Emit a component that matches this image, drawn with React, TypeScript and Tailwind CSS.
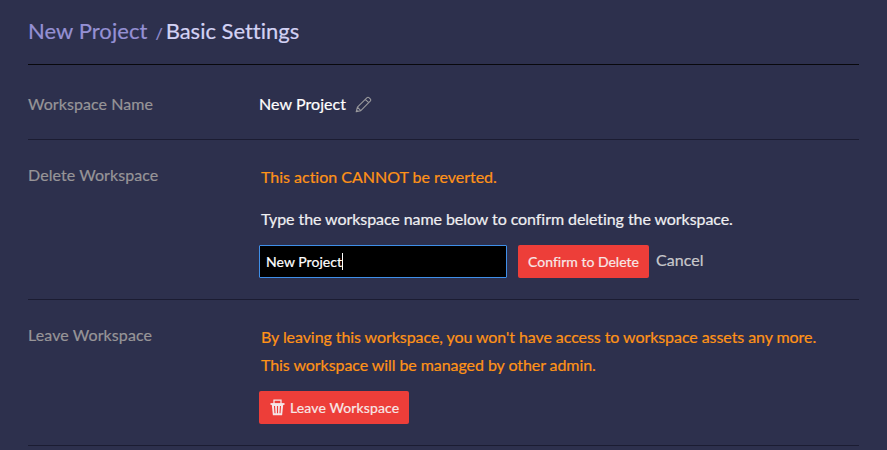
import React from 'react';

export default function App() {
  return (
    <main className="h-[450px] w-[887px] overflow-hidden bg-[#2d304d] px-7 font-['Lato',sans-serif] text-base text-white [font-variant-ligatures:none] [-webkit-text-stroke:0.2px]">
      <header className="flex h-[65px] items-start border-b border-[#08080c] pt-[15px] text-[22px] leading-8">
        <span className="tracking-[0.06px] text-[#9590d4]">New Project</span>
        <span className="ml-2 mr-[3px] text-base leading-[35px] text-[#9590d4]">/</span>
        <h1 className="text-[#d3d2f4]">Basic Settings</h1>
      </header>
      <section className="flex h-[75px] border-b border-[#1b1c32] pt-[27px] leading-6">
        <h2 className="w-[231px] tracking-[0.06px] text-[#979598]">Workspace Name</h2>
        <span className="tracking-[0.07px]">New Project</span>
        <svg className="ml-[9px] mt-[4px] h-[17px] w-[17px]" viewBox="0 0 17 17" fill="none" stroke="#99999d" strokeWidth="1.1" strokeLinejoin="round"><path d="M1.2 15.8l1.2-4.6L11.8 1.8Q13 .7 14.2 1.8l1 1q1.1 1.2 0 2.4l-9.4 9.4zM2.4 11.2l3.4 3.4M10.3 3.3l3.4 3.4M1.6 14.3l1.1 1.1" /></svg>
      </section>
      <section className="flex h-[160px] border-b border-[#1b1c32]">
        <h2 className="w-[231px] pt-[23px] leading-6 tracking-[0.07px] text-[#979598]">Delete Workspace</h2>
        <div className="flex-1">
          <p className="ml-[2px] pt-[25px] leading-6 tracking-[-0.01px] text-[#ff9317]">This action CANNOT be reverted.</p>
          <p className="ml-[2px] pt-[18px] leading-6 tracking-[-0.07px] text-[#efeff2]">Type the workspace name below to confirm deleting the workspace.</p>
          <div className="mt-[14px] flex">
            <div className="flex h-[33px] w-[248px] items-center rounded-[1px] border border-[#3f8fe8] bg-black px-[6px] text-sm tracking-[0.05px]">New Project<span className="h-[17px] w-px bg-white" /></div>
            <button className="ml-[11px] h-[33px] w-[131px] rounded-[2px] bg-[#ed3e39] text-sm text-[#f8e8e8]">Confirm to Delete</button>
            <button className="ml-[7px] h-[30px] tracking-[0.07px] text-[#c8c8cb]">Cancel</button>
          </div>
        </div>
      </section>
      <section className="flex h-[146px] border-b border-[#1b1c32]">
        <h2 className="w-[231px] pt-[23px] leading-6 tracking-[0.09px] text-[#979598]">Leave Workspace</h2>
        <div className="flex-1">
          <p className="ml-[2px] pt-[23px] leading-7 tracking-[-0.07px] text-[#ff9317]">By leaving this workspace, you won't have access to workspace assets any more.<br />This workspace will be managed by other admin.</p>
          <button className="mt-[12px] flex h-[33px] w-[150px] items-center rounded-[2px] bg-[#ed3e39] pl-[11px] text-sm tracking-[0.12px] text-[#f8e8e8]">
            <svg className="mr-[5px] h-[17px] w-[15px]" viewBox="0 0 15 17" fill="none" stroke="#f5e6e8"><path d="M4 5V1.2h7V5" strokeWidth="1.3" /><path d="M.5 5h14" strokeWidth="1.8" /><path d="M1.7 5h11.6l-1.2 11.3H2.9z" fill="#f5e6e8" stroke="none" /><path d="M4.5 7l.5 7.2M7.5 7v7.2M10.5 7l-.5 7.2" stroke="#ed3e39" strokeWidth="1.1" /></svg>
            Leave Workspace
          </button>
        </div>
      </section>
    </main>
  );
}
